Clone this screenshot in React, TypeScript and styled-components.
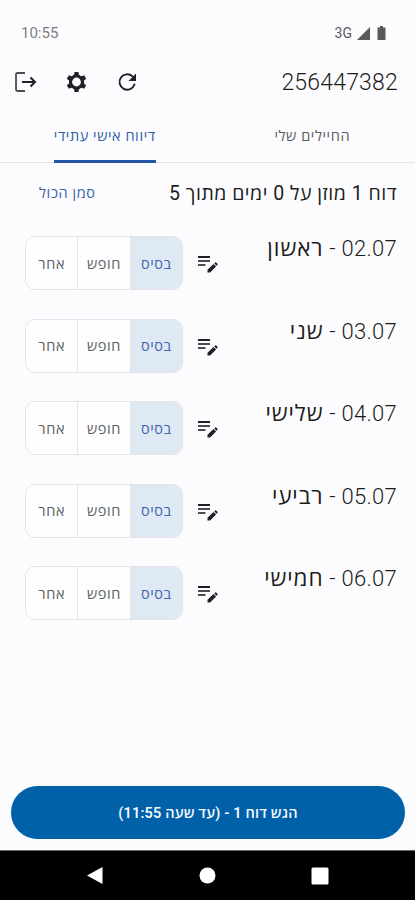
import styled, { createGlobalStyle } from "styled-components";

interface Day {
  date: string;
  name: string;
}

const DAYS: Day[] = [
  { date: "02.07", name: "ראשון" },
  { date: "03.07", name: "שני" },
  { date: "04.07", name: "שלישי" },
  { date: "05.07", name: "רביעי" },
  { date: "06.07", name: "חמישי" },
];

const STATUSES = ["בסיס", "חופש", "אחר"];

const GlobalStyle = createGlobalStyle`
  * {
    box-sizing: border-box;
  }
  body {
    margin: 0;
    background: #fcfcff;
    font-family: Roboto, "Open Sans", "Noto Sans", sans-serif;
  }
  button {
    padding: 0;
    border: 0;
    background: none;
    font-family: inherit;
  }
`;

const Screen = styled.div`
  width: 415px;
  height: 900px;
  display: flex;
  flex-direction: column;
  overflow: hidden;
  background: #fcfcff;
  color: #1c1c20;
`;

const StatusBar = styled.div`
  height: 56px;
  padding: 10px 27px 0 21px;
  display: flex;
  align-items: center;
  justify-content: space-between;
  color: #7c7c7f;
  font-size: 15px;
`;

const StatusIcons = styled.div`
  display: flex;
  align-items: center;
  gap: 5px;
  color: #59595c;
  font-size: 14px;
`;

const AppBar = styled.header`
  height: 52px;
  padding: 0 17px 0 13px;
  display: flex;
  align-items: center;
  justify-content: space-between;
`;

const Actions = styled.div`
  display: flex;
  gap: 27px;
`;

const IconButton = styled.button`
  width: 24px;
  height: 24px;
  display: flex;
  color: #202126;
`;

const SoldierId = styled.h1`
  margin: 0;
  font-size: 23px;
  font-weight: 350;
  letter-spacing: 0.2px;
`;

const Tabs = styled.nav`
  height: 55px;
  display: flex;
  direction: rtl;
  border-bottom: 1px solid #e3e4e8;
`;

const Tab = styled.button<{ $active?: boolean }>`
  flex: 1;
  display: flex;
  justify-content: center;
  padding-left: 2px;
  color: ${(p) => (p.$active ? "#2f5fa8" : "#5b5c60")};
  font-size: 14.5px;
  letter-spacing: 0.6px;
`;

const TabLabel = styled.span<{ $active?: boolean }>`
  height: 55px;
  padding-top: 1px;
  line-height: 55px;
  border-bottom: 3px solid ${(p) => (p.$active ? "#2456a8" : "transparent")};
  border-radius: 2px 2px 0 0;
`;

const Summary = styled.div`
  height: 58px;
  padding: 0 18px 0 39px;
  display: flex;
  align-items: center;
  justify-content: space-between;
  direction: rtl;
  font-size: 19.5px;
  letter-spacing: 0.5px;
`;

const SelectAll = styled.button`
  color: #3b63a8;
  font-size: 14.5px;
  letter-spacing: 0.6px;
`;

const DayList = styled.main`
  flex: 1;
  padding-top: 15px;
`;

const DayRow = styled.div`
  height: 82.6px;
  padding: 0 18px 0 25px;
  display: flex;
  align-items: flex-start;
  direction: rtl;
`;

const DayTitle = styled.span`
  flex: 1;
  line-height: 24px;
  font-size: 22px;
  font-weight: 350;
  letter-spacing: 0.3px;
`;

const DayName = styled.span`
  font-size: 22.5px;
  font-weight: 400;
  letter-spacing: 0.9px;
`;

const NoteButton = styled(IconButton)`
  margin: 15px 0 0 12px;
`;

const Segments = styled.div`
  width: 158px;
  height: 54px;
  display: flex;
  overflow: hidden;
  border: 1px solid #e2e4ea;
  border-radius: 10px;
`;

const Segment = styled.button<{ $selected: boolean }>`
  flex: 1;
  background: ${(p) => (p.$selected ? "#dfe9f4" : "#fefeff")};
  color: ${(p) => (p.$selected ? "#4168ae" : "#5d5e62")};
  font-size: 14.5px;
  letter-spacing: 0.6px;
  & + & {
    border-right: 1px solid #e2e4ea;
  }
`;

const SubmitButton = styled.button`
  height: 53px;
  margin: 0 10px 11px 11px;
  border-radius: 27px;
  background: #0060a8;
  color: #f3f8ff;
  direction: rtl;
  font-size: 14.5px;
  font-weight: 600;
  letter-spacing: 0.15px;
`;

const SystemNav = styled.footer`
  height: 50px;
  padding: 0 86px 0 86px;
  display: flex;
  align-items: center;
  justify-content: space-between;
  border-top: 1px solid #666;
  background: #000;
`;

const SignalIcon = () => (
  <svg width="13" height="13" viewBox="0 0 13 13">
    <path d="M13 0v13H0z" fill="currentColor" />
  </svg>
);

const BatteryIcon = () => (
  <svg width="13" height="14" viewBox="0 0 13 14">
    <path d="M5 0h3v1.5h2.5V14h-8V1.5H5z" fill="currentColor" />
  </svg>
);

const ExitIcon = () => (
  <svg width="24" height="24" viewBox="0 0 24 24" fill="none" stroke="currentColor">
    <path d="M12 3H4.500Q3 3 3 4.500v15Q3 21 4.500 21H12" strokeWidth="1.8" opacity="0.8" />
    <path d="M9 12h12.500M17.500 7.500l4.500 4.500-4.500 4.500" strokeWidth="2" />
  </svg>
);

const TEETH = [0, 60, 120, 180, 240, 300];

const GearIcon = () => (
  <svg width="24" height="24" viewBox="0 0 24 24">
    <circle cx="12.500" cy="12" r="6" fill="none" stroke="currentColor" strokeWidth="3.2" />
    {TEETH.map((angle) => (
      <path key={angle} d="M9.900 6l.6-4h4l.6 4z" fill="currentColor" transform={`rotate(${angle} 12.5 12)`} />
    ))}
  </svg>
);

const ReloadIcon = () => (
  <svg width="24" height="24" viewBox="0 0 24 24" fill="none" stroke="currentColor">
    <path d="M19.500 14.500a7.700 7.700 0 1 1-2-8.100l2 2" strokeWidth="1.9" strokeLinecap="round" />
    <path d="M21 3.500v7.500h-7.500z" fill="currentColor" stroke="none" />
  </svg>
);

const NoteIcon = () => (
  <svg width="24" height="24" viewBox="0 0 24 24" fill="none" stroke="currentColor">
    <path d="M3 6h12" strokeWidth="2" />
    <path d="M3 10h12M3 14h7.500" strokeWidth="1.8" opacity="0.8" />
    <path
      d="M12.500 21.500v-2.800l6-5.700 2.600 2.600-6 5.900zM19.200 12.500l1-.9q.6-.5 1.200.1l1 1q.6.6 0 1.200l-.8.8z"
      fill="currentColor"
      stroke="none"
    />
  </svg>
);

const App = () => (
  <>
    <GlobalStyle />
    <Screen>
      <StatusBar>
        <span>10:55</span>
        <StatusIcons>
          3G
          <SignalIcon />
          <BatteryIcon />
        </StatusIcons>
      </StatusBar>
      <AppBar>
        <Actions>
          <IconButton>
            <ExitIcon />
          </IconButton>
          <IconButton>
            <GearIcon />
          </IconButton>
          <IconButton>
            <ReloadIcon />
          </IconButton>
        </Actions>
        <SoldierId>256447382</SoldierId>
      </AppBar>
      <Tabs>
        <Tab>
          <TabLabel>החיילים שלי</TabLabel>
        </Tab>
        <Tab $active>
          <TabLabel $active>דיווח אישי עתידי</TabLabel>
        </Tab>
      </Tabs>
      <Summary>
        <span>דוח 1 מוזן על 0 ימים מתוך 5</span>
        <SelectAll>סמן הכול</SelectAll>
      </Summary>
      <DayList>
        {DAYS.map((day) => (
          <DayRow key={day.date}>
            <DayTitle>
              {day.date} - <DayName>{day.name}</DayName>
            </DayTitle>
            <NoteButton>
              <NoteIcon />
            </NoteButton>
            <Segments>
              {STATUSES.map((status, i) => (
                <Segment key={status} $selected={i === 0}>
                  {status}
                </Segment>
              ))}
            </Segments>
          </DayRow>
        ))}
      </DayList>
      <SubmitButton>הגש דוח 1 - (עד שעה 11:55)</SubmitButton>
      <SystemNav>
        <svg width="17" height="19" viewBox="0 0 17 19">
          <path d="M16.500 1v17L1 9.500z" fill="#fff" />
        </svg>
        <svg width="17" height="17" viewBox="0 0 17 17">
          <circle cx="8.500" cy="8.500" r="8" fill="#fff" />
        </svg>
        <svg width="18" height="18" viewBox="0 0 18 18">
          <rect x="0.500" y="0.500" width="17" height="17" rx="1.500" fill="#fff" />
        </svg>
      </SystemNav>
    </Screen>
  </>
);

export default App;
